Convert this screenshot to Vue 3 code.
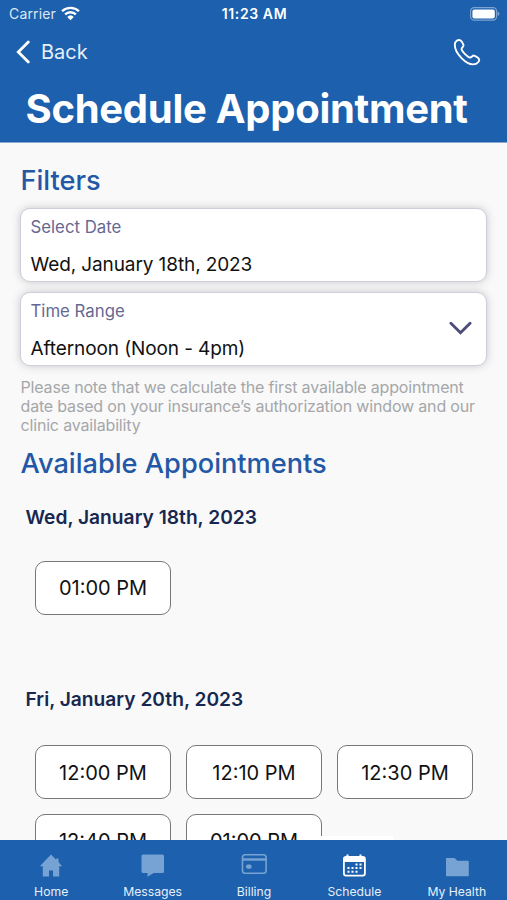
<script setup>
import { ref } from 'vue'

const activeTab = ref('Schedule')

const days = [
  { date: 'Wed, January 18th, 2023', slots: ['01:00 PM'] },
  {
    date: 'Fri, January 20th, 2023',
    slots: ['12:00 PM', '12:10 PM', '12:30 PM', '12:40 PM', '01:00 PM'],
  },
]

const tabs = ['Home', 'Messages', 'Billing', 'Schedule', 'My Health']
</script>

<template>
  <div class="screen">
    <header class="header">
      <div class="status-bar">
        <div class="carrier">
          <span>Carrier</span>
          <svg class="wifi" viewBox="0 0 18 14">
            <path d="M1 4.9a11.5 11.5 0 0 1 16 0" />
            <path d="M3.9 7.9a7.3 7.3 0 0 1 10.2 0" />
            <path class="dot" d="M9 13.4 5.9 10.2a4.5 4.5 0 0 1 6.2 0z" />
          </svg>
        </div>
        <span class="clock">11:23 AM</span>
        <svg class="battery" viewBox="0 0 30 14">
          <rect class="shell" x=".6" y=".6" width="26" height="12.6" rx="3.6" />
          <rect x="2.4" y="2.4" width="22.4" height="9" rx="2" fill="#fff" />
          <path class="cap" d="M27.6 4.8c2.4.6 2.4 3.6 0 4.2z" />
        </svg>
      </div>
      <div class="nav-row">
        <button class="back">
          <svg class="back-icon" viewBox="0 0 14 24">
            <path d="M12.3 2 2.3 12l10 10" />
          </svg>
          <span>Back</span>
        </button>
        <svg class="phone" viewBox="0 0 28 28">
          <path d="M2.2 4.6C3.4 2.6 5.4 1.5 7 2.2c1.3.6 3.1 3.5 3.5 4.9.4 1.5-2 2.3-1.9 4 .1 2.1 6.3 8.3 8.4 8.4 1.7.1 2.5-2.3 4-1.9 1.4.4 4.5 2.3 5 3.6.6 1.6-.5 3.3-2.5 4.4C14.5 29.5-.3 14 2.2 4.6z" />
        </svg>
      </div>
      <h1 class="title">Schedule Appointment</h1>
    </header>

    <main class="content">
      <h2 class="section-title">Filters</h2>
      <div class="field">
        <div>
          <p class="field-label">Select Date</p>
          <p class="field-value">Wed, January 18th, 2023</p>
        </div>
      </div>
      <div class="field">
        <div>
          <p class="field-label">Time Range</p>
          <p class="field-value">Afternoon (Noon - 4pm)</p>
        </div>
        <svg class="chevron" viewBox="0 0 24 14">
          <path d="m2 2 10 10L22 2" />
        </svg>
      </div>
      <p class="note">
        Please note that we calculate the first available appointment<br />
        date based on your insurance’s authorization window and our<br />
        clinic availability
      </p>

      <h2 class="section-title available-title">Available Appointments</h2>
      <section v-for="day in days" :key="day.date" class="day">
        <h3 class="day-title">{{ day.date }}</h3>
        <div class="slots">
          <button v-for="slot in day.slots" :key="slot" class="slot">{{ slot }}</button>
        </div>
      </section>
    </main>

    <nav class="tab-bar">
      <button
        v-for="tab in tabs"
        :key="tab"
        class="tab"
        :class="{ active: tab === activeTab }"
        @click="activeTab = tab"
      >
        <svg class="tab-icon" viewBox="0 0 26 26">
          <path v-if="tab === 'Home'" d="M13 1.5 1.8 13.3h3V23.500h6.200v-6h4v6h6.200V13.300h3L20.500 9V5.500h-2.300v1.300z" />
          <path v-else-if="tab === 'Messages'" d="M3 1.500h19.500A1.500 1.500 0 0 1 24 3v15.500a1.500 1.500 0 0 1-1.500 1.500h-8.700L7.500 23.800V20H3a1.500 1.500 0 0 1-1.500-1.500V3A1.500 1.500 0 0 1 3 1.500z" />
          <g v-else-if="tab === 'Billing'">
            <rect x="1.500" y="1.800" width="23.600" height="18.500" rx="2.800" fill="none" stroke="currentColor" stroke-width="1.600" />
            <path d="M1.500 5.300h23.600v2.400H1.500z" />
            <rect x="5" y="11.600" width="5.600" height="4.200" rx="1.800" />
          </g>
          <g v-else-if="tab === 'Schedule'">
            <path fill-rule="evenodd" d="M5.500 1.500h2V3h11V1.500h2V3h1.300a3 3 0 0 1 3 3v14.500a3 3 0 0 1-3 3H5a3 3 0 0 1-3-3V6a3 3 0 0 1 3-3h.5zM3.800 9v11.300c0 .9.600 1.500 1.500 1.500h16.200c.9 0 1.500-.6 1.500-1.500V9z" />
            <path d="M14.500 10.500h2v2h-2zM18.500 10.500h2v2h-2zM6.500 14.100h2v2h-2zM10.500 14.100h2v2h-2zM14.500 14.100h2v2h-2zM18.500 14.100h2v2h-2zM6.500 17.700h2v2h-2zM10.500 17.700h2v2h-2zM14.500 17.700h2v2h-2z" />
          </g>
          <path v-else d="M2 5h8.500l3 2.800H24a.8.8 0 0 1 .8.800v13.800a.8.800 0 0 1-.8.800H2.800a.8.8 0 0 1-.8-.8z" />
        </svg>
        <span class="tab-label">{{ tab }}</span>
      </button>
    </nav>
  </div>
</template>

<style>
body {
  margin: 0;
}
</style>

<style scoped>
.screen {
  display: flex;
  flex-direction: column;
  width: 507px;
  height: 900px;
  overflow: hidden;
  background: #f9f9f9;
  font-family: Inter, "Liberation Sans", sans-serif;
}

h1,
h2,
h3,
p {
  margin: 0;
  white-space: nowrap;
}

button {
  padding: 0;
  border: 0;
  background: none;
  font-family: inherit;
}

svg {
  display: block;
}

.header {
  flex: none;
  box-sizing: border-box;
  height: 143px;
  border-bottom: 1px solid #8ca8ce;
  background: #1d60ad;
  color: #fff;
}

.status-bar {
  display: grid;
  grid-template-columns: 1fr auto 1fr;
  align-items: center;
  height: 27px;
  padding: 0 7px 0 9px;
  font-size: 14px;
}

.carrier {
  display: flex;
  align-items: center;
  gap: 5px;
  color: #dce8f5;
  letter-spacing: 0.15px;
}

.wifi {
  width: 19px;
  height: 15px;
  fill: none;
  stroke: #fff;
  stroke-width: 2.2;
}

.wifi .dot {
  fill: #fff;
  stroke: none;
}

.clock {
  font-weight: 600;
  letter-spacing: 0.6px;
}

.battery {
  justify-self: end;
  width: 30px;
  height: 14px;
}

.shell {
  fill: none;
  stroke: #7da3d1;
  stroke-width: 1.2;
}

.cap {
  fill: #7da3d1;
}

.nav-row {
  display: flex;
  align-items: center;
  justify-content: space-between;
  height: 50px;
  padding: 0 26px 0 16px;
}

.back {
  display: flex;
  align-items: center;
  gap: 11px;
  color: #e6eff9;
  font-size: 20px;
}

.back-icon {
  width: 14px;
  height: 24px;
  fill: none;
  stroke: #fff;
  stroke-width: 2.8;
  stroke-linecap: round;
}

.phone {
  width: 28px;
  height: 28px;
  fill: none;
  stroke: #fff;
  stroke-width: 1.9;
}

.title {
  padding-left: 25.5px;
  font-size: 40px;
  font-weight: 700;
  letter-spacing: -0.28px;
  line-height: 64px;
}

.content {
  flex: 1;
  min-height: 0;
  overflow: hidden;
  padding: 18px 20px 0;
}

.section-title {
  padding-left: 0.5px;
  color: #2258a5;
  font-size: 27.2px;
  font-weight: 500;
  line-height: 40px;
}

.field {
  display: flex;
  align-items: center;
  justify-content: space-between;
  box-sizing: border-box;
  height: 74px;
  margin-top: 7px;
  padding: 0 14px 0 9.5px;
  border: 1.5px solid #cfcedd;
  border-radius: 10px;
  background: #fff;
  box-shadow: 0 0 9px rgba(60, 60, 80, 0.26);
}

.field + .field {
  margin-top: 10px;
}

.field > div {
  padding-top: 3px;
}

.field-label {
  color: #666894;
  font-size: 16.8px;
  line-height: 20px;
}

.field-value {
  margin-top: 16px;
  color: #111;
  font-size: 19px;
  letter-spacing: -0.1px;
  line-height: 24px;
}

.chevron {
  width: 23px;
  height: 14px;
  margin-bottom: 3px;
  fill: none;
  stroke: #4d4d7c;
  stroke-width: 3;
  stroke-linecap: round;
}

.note {
  margin-top: 12px;
  padding-left: 0.5px;
  color: #a5a7a9;
  font-size: 16px;
  letter-spacing: -0.17px;
  line-height: 19px;
}

.available-title {
  margin-top: 9px;
}

.day {
  padding-left: 5px;
}

.day-title {
  height: 26px;
  margin-top: 20px;
  padding-left: 0.5px;
  color: #172850;
  font-size: 19.2px;
  font-weight: 600;
  line-height: 26px;
}

.slots {
  display: flex;
  flex-wrap: wrap;
  gap: 14.5px 15px;
  padding: 30.5px 0 51.5px 10px;
}

.day + .day .slots {
  padding-top: 33px;
}

.slot {
  box-sizing: border-box;
  width: 136px;
  height: 54px;
  padding-top: 1px;
  border: 1.5px solid #777;
  border-radius: 10px;
  background: #fff;
  color: #111;
  font-size: 20px;
}

.tab-bar {
  display: grid;
  flex: none;
  grid-template-columns: repeat(5, 1fr);
  height: 60px;
  background: #1d60ad;
}

.tab {
  position: relative;
  display: flex;
  flex-direction: column;
  align-items: center;
  padding-top: 13px;
  padding-left: 1px;
  color: #76a2d4;
}

.tab.active {
  padding-right: 1px;
  padding-left: 0;
  color: #fff;
}

/* indicator sits on top of the scrolled list */
.tab.active::before {
  content: "";
  position: absolute;
  top: -4px;
  left: 12px;
  width: 77px;
  height: 4px;
  background: #fff;
}

.tab-icon {
  width: 26px;
  height: 26px;
  fill: currentColor;
}

.tab-label {
  margin-top: 4.5px;
  color: #e6eff9;
  font-size: 12.2px;
  line-height: 16px;
}
</style>
